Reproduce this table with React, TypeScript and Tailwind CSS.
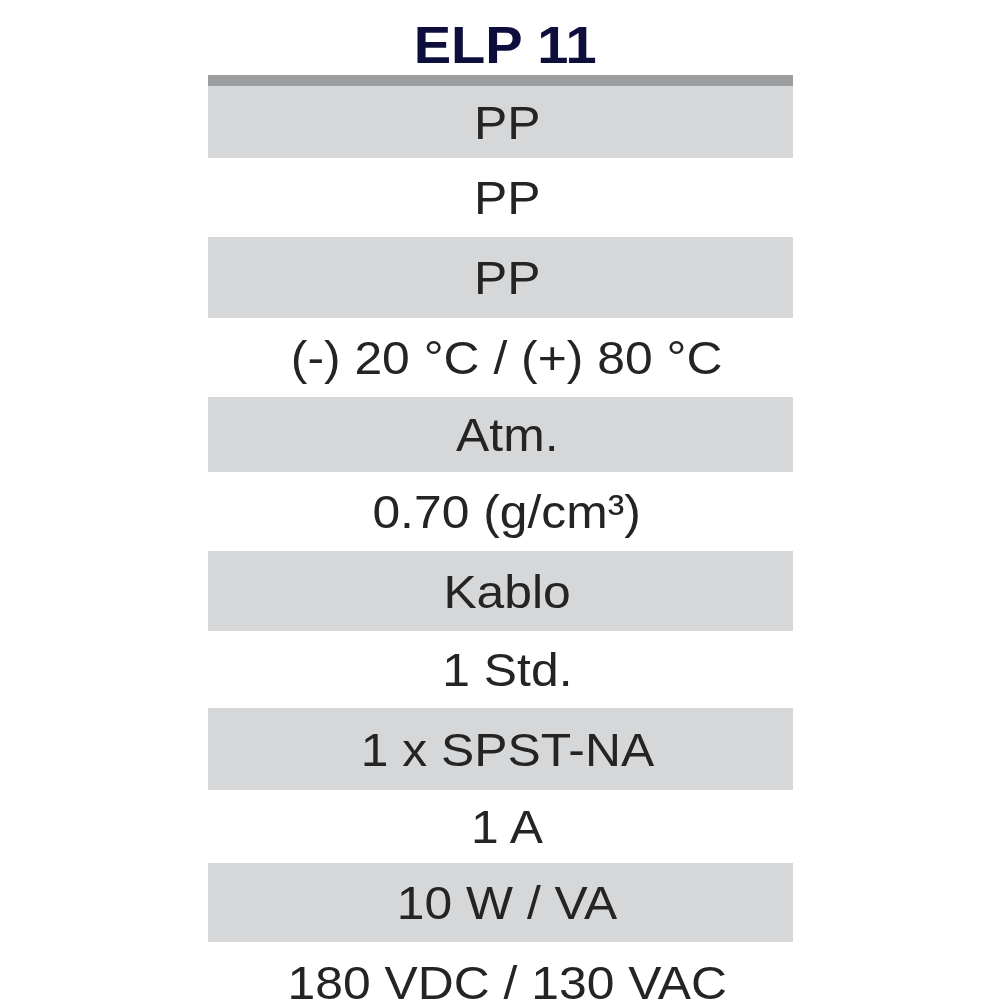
const rows: { text: string; h: number }[] = [
  { text: "PP", h: 72 },
  { text: "PP", h: 79 },
  { text: "PP", h: 81 },
  { text: "(-) 20 °C / (+) 80 °C", h: 79 },
  { text: "Atm.", h: 75 },
  { text: "0.70 (g/cm³)", h: 79 },
  { text: "Kablo", h: 80 },
  { text: "1 Std.", h: 77 },
  { text: "1 x SPST-NA", h: 82 },
  { text: "1 A", h: 73 },
  { text: "10 W / VA", h: 79 },
  { text: "180 VDC / 130 VAC", h: 80 },
];

export default function App() {
  return (
    <div
      className="w-[1000px] h-[1000px] overflow-hidden bg-white"
      style={{ fontFamily: '"Liberation Sans", Arial, sans-serif' }}
    >
      <div className="ml-[208px] w-[585px]">
        <div className="h-[75px] pt-[20px] pl-[10px] flex justify-center text-[51px] leading-none font-bold text-[#0e0e3c]">
          <span className="inline-block scale-x-[1.1]">ELP 11</span>
        </div>
        <div className="h-[11px] bg-[#9d9e9f]" />
        {rows.map((r, i) => (
          <div
            key={i}
            style={{ height: r.h }}
            className={`flex items-center justify-center pl-[13px] text-[47px] leading-none text-[#242424] whitespace-nowrap ${
              i % 2 === 0 ? "bg-[#d5d7d9]" : "bg-white"
            }`}
          >
            <span className="inline-block scale-x-[1.06]">{r.text}</span>
          </div>
        ))}
      </div>
    </div>
  );
}
